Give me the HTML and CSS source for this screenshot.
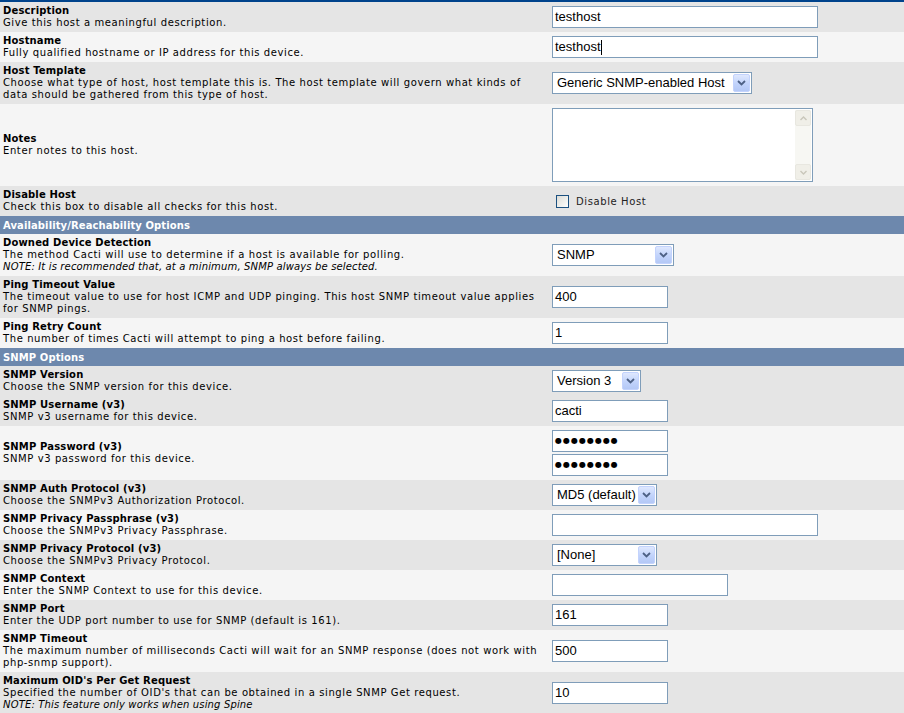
FILE: index.html
```html
<!DOCTYPE html>
<html>
<head>
<meta charset="utf-8">
<title>Host edit</title>
<link rel="stylesheet" href="styles.css">
</head>
<body>
<div class="frame">
<table class="form">
  <tr class="row-a h30">
    <td class="lbl"><b>Description</b><br>Give this host a meaningful description.</td>
    <td class="ctl"><div class="field w266">testhost</div></td>
  </tr>
  <tr class="row-b h30">
    <td class="lbl"><b>Hostname</b><br>Fully qualified hostname or IP address for this device.</td>
    <td class="ctl"><div class="field w266">testhost<span class="caret"></span></div></td>
  </tr>
  <tr class="row-a h42">
    <td class="lbl"><b>Host Template</b><br>Choose what type of host, host template this is. The host template will govern what kinds of<br>data should be gathered from this type of host.</td>
    <td class="ctl"><div class="select w200"><span class="sel-text">Generic SNMP-enabled Host</span><span class="sel-btn"><svg width="9" height="6" viewBox="0 0 9 6"><path d="M1 1 L4.5 4.5 L8 1" fill="none" stroke="#4d6185" stroke-width="1.8"/></svg></span></div></td>
  </tr>
  <tr class="row-b h82">
    <td class="lbl"><b>Notes</b><br>Enter notes to this host.</td>
    <td class="ctl"><div class="textarea"><div class="sb"><span class="sb-btn"><svg width="7" height="5" viewBox="0 0 7 5"><path d="M0.5 4 L3.5 1 L6.5 4" fill="none" stroke="#c9c7ba" stroke-width="1.4"/></svg></span><span class="sb-track"></span><span class="sb-btn"><svg width="7" height="5" viewBox="0 0 7 5"><path d="M0.5 1 L3.5 4 L6.5 1" fill="none" stroke="#c9c7ba" stroke-width="1.4"/></svg></span></div></div></td>
  </tr>
  <tr class="row-a h30">
    <td class="lbl"><b>Disable Host</b><br>Check this box to disable all checks for this host.</td>
    <td class="ctl"><div class="check"><span class="box"></span><span class="check-text">Disable Host</span></div></td>
  </tr>
  <tr class="head">
    <td colspan="2">Availability/Reachability Options</td>
  </tr>
  <tr class="row-b h42">
    <td class="lbl"><b>Downed Device Detection</b><br>The method Cacti will use to determine if a host is available for polling.<br><i>NOTE: It is recommended that, at a minimum, SNMP always be selected.</i></td>
    <td class="ctl"><div class="select w122"><span class="sel-text">SNMP</span><span class="sel-btn"><svg width="9" height="6" viewBox="0 0 9 6"><path d="M1 1 L4.5 4.5 L8 1" fill="none" stroke="#4d6185" stroke-width="1.8"/></svg></span></div></td>
  </tr>
  <tr class="row-a h42">
    <td class="lbl"><b>Ping Timeout Value</b><br>The timeout value to use for host ICMP and UDP pinging. This host SNMP timeout value applies<br>for SNMP pings.</td>
    <td class="ctl"><div class="field w116">400</div></td>
  </tr>
  <tr class="row-b h30">
    <td class="lbl"><b>Ping Retry Count</b><br>The number of times Cacti will attempt to ping a host before failing.</td>
    <td class="ctl"><div class="field w116">1</div></td>
  </tr>
  <tr class="head">
    <td colspan="2">SNMP Options</td>
  </tr>
  <tr class="row-a h30">
    <td class="lbl"><b>SNMP Version</b><br>Choose the SNMP version for this device.</td>
    <td class="ctl"><div class="select w89"><span class="sel-text">Version 3</span><span class="sel-btn"><svg width="9" height="6" viewBox="0 0 9 6"><path d="M1 1 L4.5 4.5 L8 1" fill="none" stroke="#4d6185" stroke-width="1.8"/></svg></span></div></td>
  </tr>
  <tr class="row-a h30">
    <td class="lbl"><b>SNMP Username (v3)</b><br>SNMP v3 username for this device.</td>
    <td class="ctl"><div class="field w116">cacti</div></td>
  </tr>
  <tr class="row-b h54">
    <td class="lbl"><b>SNMP Password (v3)</b><br>SNMP v3 password for this device.</td>
    <td class="ctl"><div class="stack"><div class="field w116 pw">●●●●●●●●</div><div class="field w116 pw">●●●●●●●●</div></div></td>
  </tr>
  <tr class="row-a h30">
    <td class="lbl"><b>SNMP Auth Protocol (v3)</b><br>Choose the SNMPv3 Authorization Protocol.</td>
    <td class="ctl"><div class="select w105"><span class="sel-text">MD5 (default)</span><span class="sel-btn"><svg width="9" height="6" viewBox="0 0 9 6"><path d="M1 1 L4.5 4.5 L8 1" fill="none" stroke="#4d6185" stroke-width="1.8"/></svg></span></div></td>
  </tr>
  <tr class="row-b h30">
    <td class="lbl"><b>SNMP Privacy Passphrase (v3)</b><br>Choose the SNMPv3 Privacy Passphrase.</td>
    <td class="ctl"><div class="field w266"></div></td>
  </tr>
  <tr class="row-a h30">
    <td class="lbl"><b>SNMP Privacy Protocol (v3)</b><br>Choose the SNMPv3 Privacy Protocol.</td>
    <td class="ctl"><div class="select w105"><span class="sel-text">[None]</span><span class="sel-btn"><svg width="9" height="6" viewBox="0 0 9 6"><path d="M1 1 L4.5 4.5 L8 1" fill="none" stroke="#4d6185" stroke-width="1.8"/></svg></span></div></td>
  </tr>
  <tr class="row-b h30">
    <td class="lbl"><b>SNMP Context</b><br>Enter the SNMP Context to use for this device.</td>
    <td class="ctl"><div class="field w176"></div></td>
  </tr>
  <tr class="row-a h30">
    <td class="lbl"><b>SNMP Port</b><br>Enter the UDP port number to use for SNMP (default is 161).</td>
    <td class="ctl"><div class="field w116">161</div></td>
  </tr>
  <tr class="row-b h42">
    <td class="lbl"><b>SNMP Timeout</b><br>The maximum number of milliseconds Cacti will wait for an SNMP response (does not work with<br>php-snmp support).</td>
    <td class="ctl"><div class="field w116">500</div></td>
  </tr>
  <tr class="row-a h42">
    <td class="lbl"><b>Maximum OID's Per Get Request</b><br>Specified the number of OID's that can be obtained in a single SNMP Get request.<br><i>NOTE: This feature only works when using Spine</i></td>
    <td class="ctl"><div class="field w116">10</div></td>
  </tr>
</table>
</div>
</body>
</html>
```
FILE: styles.css
```css
html, body {
  margin: 0;
  padding: 0;
  background: #ffffff;
}

.frame {
  border-top: 2px solid #00438c;
}

.form {
  width: 100%;
  border-collapse: collapse;
  border-spacing: 0;
  font-family: "DejaVu Sans", Verdana, sans-serif;
  font-size: 10px;
  line-height: 12px;
  color: #000000;
}

.form td {
  padding: 3px;
  vertical-align: middle;
}

.lbl {
  width: 543px;
  white-space: nowrap;
  letter-spacing: 0.6px;
  padding-top: 4px;
  padding-bottom: 2px;
}

.lbl b {
  letter-spacing: 0.15px;
}

.lbl i {
  letter-spacing: 0.15px;
}

.row-a { background: #e5e5e5; }
.row-b { background: #f5f5f5; }

.h30 { height: 30px; }
.h42 { height: 42px; }
.h54 { height: 54px; }
.h82 { height: 82px; }

.head td {
  background: #6d88ad;
  color: #ffffff;
  font-weight: bold;
  letter-spacing: 0.1px;
  height: 12px;
  padding-top: 4px;
  padding-bottom: 2px;
}

.field,
.select,
.textarea {
  box-sizing: border-box;
  border: 1px solid #7f9db9;
  background: #ffffff;
  font-family: "Liberation Sans", Arial, sans-serif;
  font-size: 13px;
  letter-spacing: 0;
  color: #000000;
}

.field {
  height: 22px;
  line-height: 20px;
  padding: 0 2px;
  display: flex;
  align-items: center;
}

.caret {
  display: inline-block;
  width: 1px;
  height: 15px;
  background: #000000;
}

.pw {
  font-family: "DejaVu Sans", sans-serif;
  font-size: 8px;
  letter-spacing: 1px;
}

.stack {
  display: flex;
  flex-direction: column;
  gap: 2px;
}

.w266 { width: 266px; }
.w200 { width: 200px; }
.w176 { width: 176px; }
.w122 { width: 122px; }
.w116 { width: 116px; }
.w105 { width: 105px; }
.w89 { width: 89px; }

.select {
  height: 22px;
  line-height: 20px;
  display: flex;
  align-items: center;
  justify-content: space-between;
  padding: 0 1px 0 4px;
}

.sel-text {
  white-space: nowrap;
}

.sel-btn {
  flex: none;
  box-sizing: border-box;
  width: 17px;
  height: 18px;
  border: 1px solid #c3d3fd;
  border-radius: 2px;
  background: linear-gradient(180deg, #dfe8fe 0%, #c1d3fb 55%, #b4c8f6 100%);
  display: flex;
  align-items: center;
  justify-content: center;
}

.textarea {
  width: 261px;
  height: 74px;
  display: flex;
  justify-content: flex-end;
  padding: 1px;
}

.sb {
  width: 16px;
  display: flex;
  flex-direction: column;
  background: #f7f7f3;
}

.sb-btn {
  box-sizing: border-box;
  height: 16px;
  border: 1px solid #e8e7e0;
  border-radius: 2px;
  background: #f0efe8;
  display: flex;
  align-items: center;
  justify-content: center;
}

.sb-track {
  flex: 1;
}

.check {
  display: flex;
  align-items: center;
  padding-left: 4px;
}

.box {
  box-sizing: border-box;
  width: 13px;
  height: 13px;
  border: 1px solid #1c5180;
  background: linear-gradient(135deg, #dcdcd7 0%, #f4f4f1 70%, #ffffff 100%);
}

.check-text {
  margin-left: 7px;
  margin-top: 2px;
  font-family: "DejaVu Sans", Verdana, sans-serif;
  font-size: 10px;
  letter-spacing: 0.6px;
  color: #222222;
}
```
